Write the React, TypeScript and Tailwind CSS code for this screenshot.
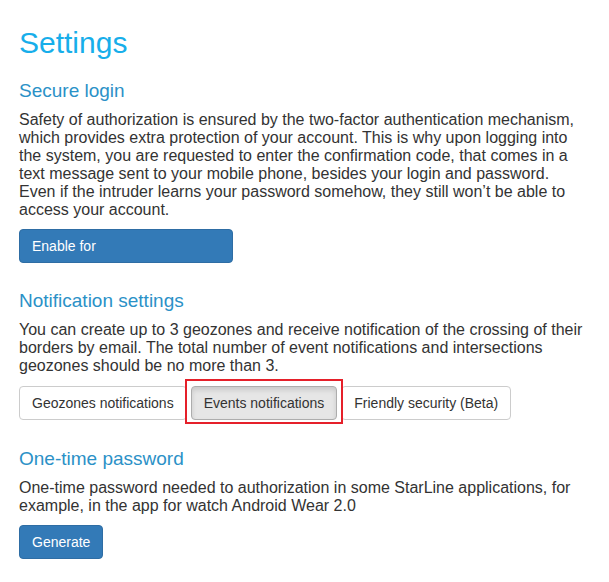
const font = { fontFamily: '"Liberation Sans", Arial, sans-serif' };

function PrimaryButton({ children, className = "" }: { children: React.ReactNode; className?: string }) {
  return (
    <button
      type="button"
      className={`block h-[34px] rounded-[4px] border border-[#2e6da4] bg-[#337ab7] px-3 text-left text-[14px] leading-5 text-white ${className}`}
    >
      {children}
    </button>
  );
}

function TabButton({ label, active = false }: { label: string; active?: boolean }) {
  if (active) {
    return (
      <div className="relative">
        <button
          type="button"
          className="h-[34px] rounded-[4px] border border-[#adadad] bg-[#e6e6e6] px-3 text-[14px] leading-5 text-[#333] shadow-[inset_0_3px_5px_rgba(0,0,0,0.125)]"
        >
          {label}
        </button>
        <div className="pointer-events-none absolute -top-[7px] -bottom-[4px] -left-[6px] -right-[6px] border-2 border-[#e5202a]" />
      </div>
    );
  }
  return (
    <button
      type="button"
      className="h-[34px] rounded-[4px] border border-[#ccc] bg-white px-3 text-[14px] leading-5 text-[#333]"
    >
      {label}
    </button>
  );
}

export default function App() {
  return (
    <main style={font} className="min-h-[582px] w-[609px] bg-white pl-[19px] pr-[24px] pt-[26px] text-[#333]">
      <h1 className="text-[30px] leading-[33px] text-[#17aeea]">Settings</h1>

      <h2 className="mt-[21px] text-[19px] leading-[22px] text-[#2b91c7]">Secure login</h2>
      <p className="mt-[9px] text-[16px] leading-[18px]">
        Safety of authorization is ensured by the two-factor authentication mechanism, which provides extra
        protection of your account. This is why upon logging into the system, you are requested to enter the
        confirmation code, that comes in a text message sent to your mobile phone, besides your login and
        password. Even if the intruder learns your password somehow, they still won’t be able to access your
        account.
      </p>
      <PrimaryButton className="mt-[10px] w-[214px]">Enable for</PrimaryButton>

      <h2 className="mt-[27px] text-[19px] leading-[22px] text-[#2b91c7]">Notification settings</h2>
      <p className="mt-[9px] text-[16px] leading-[18px]">
        You can create up to 3 geozones and receive notification of the crossing of their borders by email. The
        total number of event notifications and intersections geozones should be no more than 3.
      </p>
      <div className="mt-[11px] flex gap-1">
        <TabButton label="Geozones notifications" />
        <TabButton label="Events notifications" active />
        <TabButton label="Friendly security (Beta)" />
      </div>

      <h2 className="mt-[28px] text-[19px] leading-[22px] text-[#2b91c7]">One-time password</h2>
      <p className="mt-[9px] text-[16px] leading-[18px]">
        One-time password needed to authorization in some StarLine applications, for example, in the app for
        watch Android Wear 2.0
      </p>
      <PrimaryButton className="mt-[10px]">Generate</PrimaryButton>
    </main>
  );
}
